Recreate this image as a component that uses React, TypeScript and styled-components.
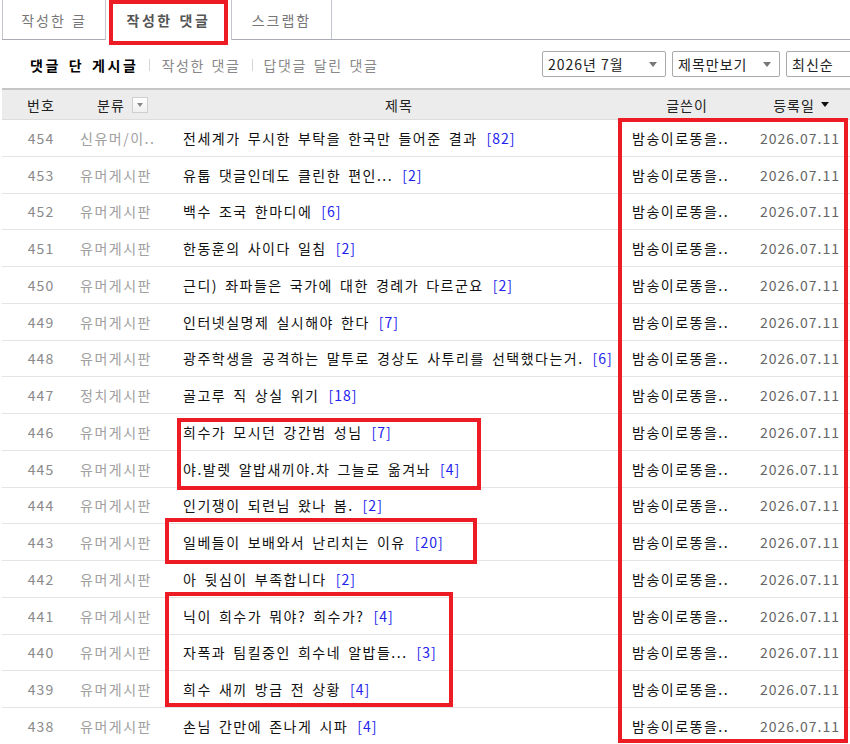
import React from "react";
import styled, { createGlobalStyle } from "styled-components";

interface Post {
    no: number;
    category: string;
    title: string;
    comments: number;
}

const POSTS: Post[] = [
    { no: 454, category: "신유머/이..", title: "전세계가 무시한 부탁을 한국만 들어준 결과", comments: 82 },
    { no: 453, category: "유머게시판", title: "유툽 댓글인데도 클린한 편인...", comments: 2 },
    { no: 452, category: "유머게시판", title: "백수 조국 한마디에", comments: 6 },
    { no: 451, category: "유머게시판", title: "한동훈의 사이다 일침", comments: 2 },
    { no: 450, category: "유머게시판", title: "근디) 좌파들은 국가에 대한 경례가 다르군요", comments: 2 },
    { no: 449, category: "유머게시판", title: "인터넷실명제 실시해야 한다", comments: 7 },
    { no: 448, category: "유머게시판", title: "광주학생을 공격하는 말투로 경상도 사투리를 선택했다는거.", comments: 6 },
    { no: 447, category: "정치게시판", title: "골고루 직 상실 위기", comments: 18 },
    { no: 446, category: "유머게시판", title: "희수가 모시던 강간범 성님", comments: 7 },
    { no: 445, category: "유머게시판", title: "야.발렛 알밥새끼야.차 그늘로 옮겨놔", comments: 4 },
    { no: 444, category: "유머게시판", title: "인기쟁이 되련님 왔나 봄.", comments: 2 },
    { no: 443, category: "유머게시판", title: "일베들이 보배와서 난리치는 이유", comments: 20 },
    { no: 442, category: "유머게시판", title: "아 뒷심이 부족합니다", comments: 2 },
    { no: 441, category: "유머게시판", title: "닉이 희수가 뭐야? 희수가?", comments: 4 },
    { no: 440, category: "유머게시판", title: "자폭과 팀킬중인 희수네 알밥들...", comments: 3 },
    { no: 439, category: "유머게시판", title: "희수 새끼 방금 전 상황", comments: 4 },
    { no: 438, category: "유머게시판", title: "손님 간만에 존나게 시파", comments: 4 },
];

// annotation boxes drawn over the screenshot
const MARKS = [
    { left: 109, top: 0, width: 119, height: 45 },
    { left: 618, top: 118, width: 230, height: 625 },
    { left: 177, top: 418, width: 304, height: 72 },
    { left: 165, top: 518, width: 312, height: 46 },
    { left: 165, top: 592, width: 288, height: 115 },
];

// =============================================================================
// GLOBAL
// =============================================================================
const GlobalStyle = createGlobalStyle`
    html, body {
        margin: 0;
        padding: 0;
        background: #fff;
        overflow: hidden;
    }
    body {
        font-family: "Noto Sans CJK KR", "Noto Sans", sans-serif;
        font-size: 14px;
        letter-spacing: 1px;
        color: #111;
    }
`;

// =============================================================================
// STYLING
// =============================================================================
const Page = styled.div`
    position: relative;
    width: 850px;
    height: 744px;
    padding-left: 2px;
    box-sizing: border-box;
    overflow: hidden;
`;

const TabBar = styled.div`
    display: flex;
    height: 39px;
    border-bottom: 1px solid #a9acb4;
`;

const Tab = styled.div<{ $active?: boolean; $width: number }>`
    width: ${(p) => p.$width}px;
    box-sizing: border-box;
    display: flex;
    align-items: center;
    justify-content: center;
    border: 1px solid #c3c6d1;
    border-top: none;
    border-bottom: none;
    margin-left: -1px;
    background: #fff;
    color: ${(p) => (p.$active ? "#555" : "#777")};
    font-weight: ${(p) => (p.$active ? "bold" : "normal")};
    letter-spacing: ${(p) => (p.$active ? "2.6px" : "2px")};
    word-spacing: 1px;
    height: ${(p) => (p.$active ? "40px" : "39px")};
    &:first-child {
        margin-left: 0;
    }
`;

const Toolbar = styled.div`
    display: flex;
    align-items: center;
    justify-content: space-between;
    height: 48px;
    padding-left: 28px;
`;

const SubNav = styled.div`
    display: flex;
    align-items: center;
    gap: 11px;
    margin-top: 2px;
`;

const SubLink = styled.span<{ $active?: boolean }>`
    color: ${(p) => (p.$active ? "#000" : "#888")};
    font-weight: ${(p) => (p.$active ? "bold" : "normal")};
    letter-spacing: ${(p) => (p.$active ? "2.6px" : "1.6px")};
    word-spacing: ${(p) => (p.$active ? "2px" : "2px")};
`;

const Divider = styled.span`
    width: 1px;
    height: 12px;
    background: #d6d6d6;
`;

const Selects = styled.div`
    display: flex;
    gap: 6px;
    margin-right: -44px;
`;

const SelectBox = styled.div<{ $width: number }>`
    width: ${(p) => p.$width}px;
    height: 26px;
    box-sizing: border-box;
    border: 1px solid #aaa;
    border-radius: 2px;
    display: flex;
    align-items: center;
    justify-content: space-between;
    padding: 0 8px 0 5px;
    color: #222;
`;

const SelectArrow = styled.span`
    width: 0;
    height: 0;
    border-left: 4px solid transparent;
    border-right: 4px solid transparent;
    border-top: 5px solid #777;
`;

const Grid = styled.div`
    display: grid;
    grid-template-columns: 78px 96px 446px 130px 98px;
    align-items: center;
`;

const HeadRow = styled(Grid)`
    height: 29px;
    background: #ececec;
    border-top: 2px solid #c6c6c6;
    border-bottom: 1px solid #dcdcdc;
    color: #222;
`;

const HeadCell = styled.div<{ $align?: string; $pad?: number }>`
    display: flex;
    align-items: center;
    justify-content: ${(p) => p.$align ?? "center"};
    padding-left: ${(p) => p.$pad ?? 0}px;
    gap: 7px;
`;

const FilterButton = styled.span`
    width: 14px;
    height: 14px;
    border: 1px solid #cfcfcf;
    background: linear-gradient(#fff, #f0f0f0);
    display: flex;
    align-items: center;
    justify-content: center;
    &::after {
        content: "";
        border-left: 3px solid transparent;
        border-right: 3px solid transparent;
        border-top: 4px solid #888;
    }
`;

const SortArrow = styled.span`
    border-left: 4px solid transparent;
    border-right: 4px solid transparent;
    border-top: 5px solid #111;
    margin-left: -1px;
`;

const Row = styled(Grid)`
    height: 35.75px;
    border-bottom: 1px solid #e4e4e4;
`;

const Cell = styled.div<{ $color?: string; $align?: string; $pad?: number; $wide?: boolean }>`
    color: ${(p) => p.$color ?? "#111"};
    text-align: ${(p) => p.$align ?? "left"};
    letter-spacing: ${(p) => (p.$wide ? "1.5px" : "1px")};
    word-spacing: ${(p) => (p.$wide ? "2.5px" : "0")};
    padding: 0 ${(p) => (p.$align === "right" ? p.$pad ?? 0 : 0)}px 0
        ${(p) => (p.$align === "right" ? 0 : p.$pad ?? 0)}px;
    white-space: nowrap;
    overflow: hidden;
`;

const Count = styled.span`
    color: #2222ee;
    letter-spacing: 1px;
    margin-left: 9px;
`;

const Mark = styled.div`
    position: absolute;
    border: 4px solid #ed1c24;
    box-sizing: border-box;
    pointer-events: none;
`;

// =============================================================================
// EXPORTABLES
// =============================================================================
export default function App(): JSX.Element {
    return (
        <Page>
            <GlobalStyle />
            <TabBar>
                <Tab $width={104}>작성한 글</Tab>
                <Tab $width={127} $active>
                    작성한 댓글
                </Tab>
                <Tab $width={101}>스크랩함</Tab>
            </TabBar>

            <Toolbar>
                <SubNav>
                    <SubLink $active>댓글 단 게시글</SubLink>
                    <Divider />
                    <SubLink>작성한 댓글</SubLink>
                    <Divider />
                    <SubLink>답댓글 달린 댓글</SubLink>
                </SubNav>
                <Selects>
                    <SelectBox $width={124}>
                        2026년 7월
                        <SelectArrow />
                    </SelectBox>
                    <SelectBox $width={108}>
                        제목만보기
                        <SelectArrow />
                    </SelectBox>
                    <SelectBox $width={108}>
                        최신순
                        <SelectArrow />
                    </SelectBox>
                </Selects>
            </Toolbar>

            <HeadRow>
                <HeadCell>번호</HeadCell>
                <HeadCell $align="flex-start" $pad={17}>
                    분류
                    <FilterButton />
                </HeadCell>
                <HeadCell>제목</HeadCell>
                <HeadCell>글쓴이</HeadCell>
                <HeadCell>
                    등록일
                    <SortArrow />
                </HeadCell>
            </HeadRow>

            {POSTS.map((post) => (
                <Row key={post.no}>
                    <Cell $color="#8a8a8a" $align="center">
                        {post.no}
                    </Cell>
                    <Cell $color="#a0a0a0" $wide>
                        {post.category}
                    </Cell>
                    <Cell $pad={7} $wide>
                        {post.title}
                        <Count>[{post.comments}]</Count>
                    </Cell>
                    <Cell $pad={10} $wide>
                        밤송이로똥을..
                    </Cell>
                    <Cell $color="#666" $align="right" $pad={10}>
                        2026.07.11
                    </Cell>
                </Row>
            ))}

            {MARKS.map((m, i) => (
                <Mark
                    key={i}
                    style={{ left: m.left, top: m.top, width: m.width, height: m.height }}
                />
            ))}
        </Page>
    );
}
